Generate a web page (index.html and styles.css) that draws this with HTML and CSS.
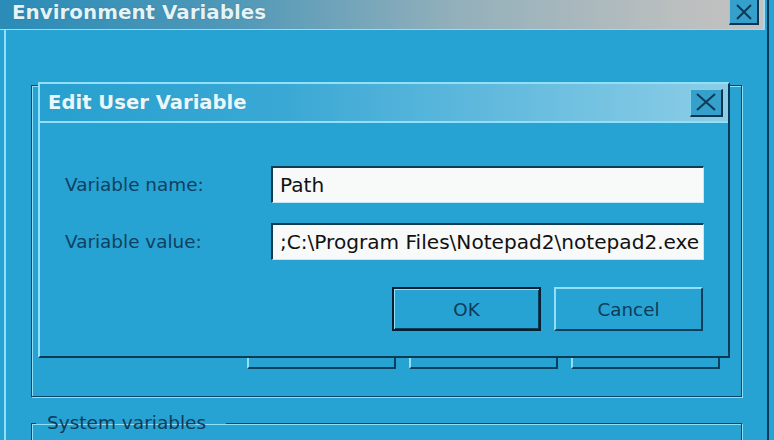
FILE: index.html
```html
<!DOCTYPE html>
<html lang="en">
<head>
<meta charset="utf-8">
<title>Edit User Variable</title>
<link rel="stylesheet" href="styles.css">
</head>
<body>
<div class="screen">
  <div class="window">
    <div class="titlebar">
      <span class="win-title">Environment Variables</span>
      <span class="close outer-close">
        <svg width="18" height="16" viewBox="0 0 18 16"><path d="M2 1 L16 15 M16 1 L2 15" stroke="#0c3a57" stroke-width="2" fill="none"/></svg>
      </span>
    </div>
    <div class="win-body">
      <div class="group user-group">
        <div class="btn-row">
          <span class="btn ghost"></span>
          <span class="btn ghost"></span>
          <span class="btn ghost"></span>
        </div>
      </div>
      <fieldset class="group sys-group">
        <legend>System variables</legend>
      </fieldset>
    </div>
  </div>

  <div class="dialog">
    <div class="dlg-title">
      <span class="dlg-title-text">Edit User Variable</span>
      <span class="close inner-close">
        <svg width="22" height="18" viewBox="0 0 22 18"><path d="M2 1 L20 17 M20 1 L2 17" stroke="#0c3a57" stroke-width="2" fill="none"/></svg>
      </span>
    </div>
    <div class="dlg-body">
      <div class="fields">
        <label class="field-label">Variable name:</label>
        <div class="input">Path</div>
        <label class="field-label">Variable value:</label>
        <div class="input">;C:\Program Files\Notepad2\notepad2.exe</div>
      </div>
      <div class="actions">
        <span class="btn default">OK</span>
        <span class="btn">Cancel</span>
      </div>
    </div>
  </div>
</div>
</body>
</html>
```
FILE: styles.css
```css
* { box-sizing: border-box; }
html, body { margin: 0; padding: 0; }
body {
  background: #26a3d2;
  font-family: "DejaVu Sans", Verdana, sans-serif;
  color: #0e3b5a;
  overflow: hidden;
}
.screen {
  position: relative;
  width: 774px;
  height: 440px;
  overflow: hidden;
}

/* outer window */
.window {
  position: absolute;
  left: 0;
  top: 0;
  width: 769px;
  height: 460px;
  border-right: 2px solid #0a3a58;
  display: flex;
  flex-direction: column;
}
.titlebar {
  flex: none;
  height: 30px;
  width: 765px;
  display: flex;
  align-items: flex-start;
  justify-content: space-between;
  background: linear-gradient(to right, #2a8cb7 0%, #4f98b8 30%, #93b0bb 60%, #bcbfbf 90%, #c2c3c2 100%);
  border-bottom: 1px solid #9fdcf2;
  border-right: 2px solid #9fdcf2;
  padding-left: 12px;
  padding-right: 4px;
}
.win-title {
  font-weight: bold;
  font-size: 19.9px;
  line-height: 26px;
  color: #e4f3f7;
  text-shadow: 0 0 1px #1f5f7a;
}
.close {
  display: flex;
  align-items: center;
  justify-content: center;
  background: #36a0cc;
  border-top: 1px solid #7fd2ee;
  border-left: 1px solid #7fd2ee;
  border-right: 2px solid #0b3550;
  border-bottom: 2px solid #0b3550;
}
.outer-close {
  width: 30px;
  height: 26px;
  margin-top: -1px;
}
.win-body {
  flex: 1;
  margin-left: 4px;
  border-left: 2px solid #8fe0f8;
  padding: 55px 0 0 25px;
  display: flex;
  flex-direction: column;
  gap: 15px;
}
.group {
  margin: 0;
  min-width: 0;
  border: 1px solid #0b4565;
  box-shadow: 1px 1px 0 #8fe0f8, inset 1px 1px 0 #8fe0f8;
  width: 711px;
}
.user-group {
  flex: none;
  height: 312px;
  padding: 0 21px 27px 0;
  display: flex;
  flex-direction: column;
  justify-content: flex-end;
}
.btn-row {
  display: flex;
  justify-content: flex-end;
  gap: 13px;
}
.sys-group {
  flex: none;
  height: 60px;
  padding: 0;
  border-bottom: none;
}
.sys-group legend {
  margin-left: 4px;
  padding: 0 20px 0 11px;
  font-size: 18.5px;
  line-height: 22px;
  color: #0e3b5a;
}

/* buttons */
.btn {
  display: flex;
  align-items: center;
  justify-content: center;
  width: 149px;
  height: 44px;
  font-size: 18.3px;
  color: #0e3b5a;
  background: #26a3d2;
  border-top: 2px solid #8fe0f8;
  border-left: 2px solid #8fe0f8;
  border-right: 2px solid #0b3f5e;
  border-bottom: 2px solid #0b3f5e;
}
.btn.ghost { height: 40px; }
.btn.default {
  border: 2px solid #081f30;
  box-shadow: inset 1px 1px 0 #8fe0f8, inset -1px -1px 0 #0b3f5e;
}

/* dialog */
.dialog {
  position: absolute;
  left: 38px;
  top: 82px;
  width: 692px;
  height: 276px;
  background: #26a3d2;
  border-top: 2px solid #8fe0f8;
  border-left: 2px solid #8fe0f8;
  border-right: 2px solid #0a3a58;
  border-bottom: 2px solid #0a3a58;
  display: flex;
  flex-direction: column;
}
.dlg-title {
  height: 39px;
  display: flex;
  align-items: center;
  justify-content: space-between;
  padding: 0 5px 0 8px;
  background: linear-gradient(to right, #27a0cf 0%, #3aa8d4 35%, #6dbfe0 75%, #8ccde6 100%);
  border-bottom: 2px solid #8fe0f8;
}
.dlg-title-text {
  font-weight: bold;
  font-size: 19.6px;
  color: #e8f8fc;
  text-shadow: 0 0 1px #3a8fb0;
}
.inner-close {
  width: 33px;
  height: 28px;
}
.dlg-body {
  padding: 43px 24px 0 25px;
  display: flex;
  flex-direction: column;
}
.fields {
  display: grid;
  grid-template-columns: 206px 433px;
  grid-auto-rows: 37px;
  row-gap: 20px;
  align-items: center;
}
.field-label {
  font-size: 18.4px;
  color: #10405f;
}
.input {
  height: 37px;
  display: flex;
  align-items: center;
  padding-left: 7px;
  background: #f8f9f9;
  color: #111;
  font-size: 20.1px;
  white-space: nowrap;
  border-top: 2px solid #123a50;
  border-left: 2px solid #123a50;
  border-right: 1px solid #bfeaf7;
  border-bottom: 1px solid #bfeaf7;
}
.actions {
  margin-top: 27px;
  display: flex;
  justify-content: flex-end;
  gap: 13px;
  padding-right: 1px;
}
```
